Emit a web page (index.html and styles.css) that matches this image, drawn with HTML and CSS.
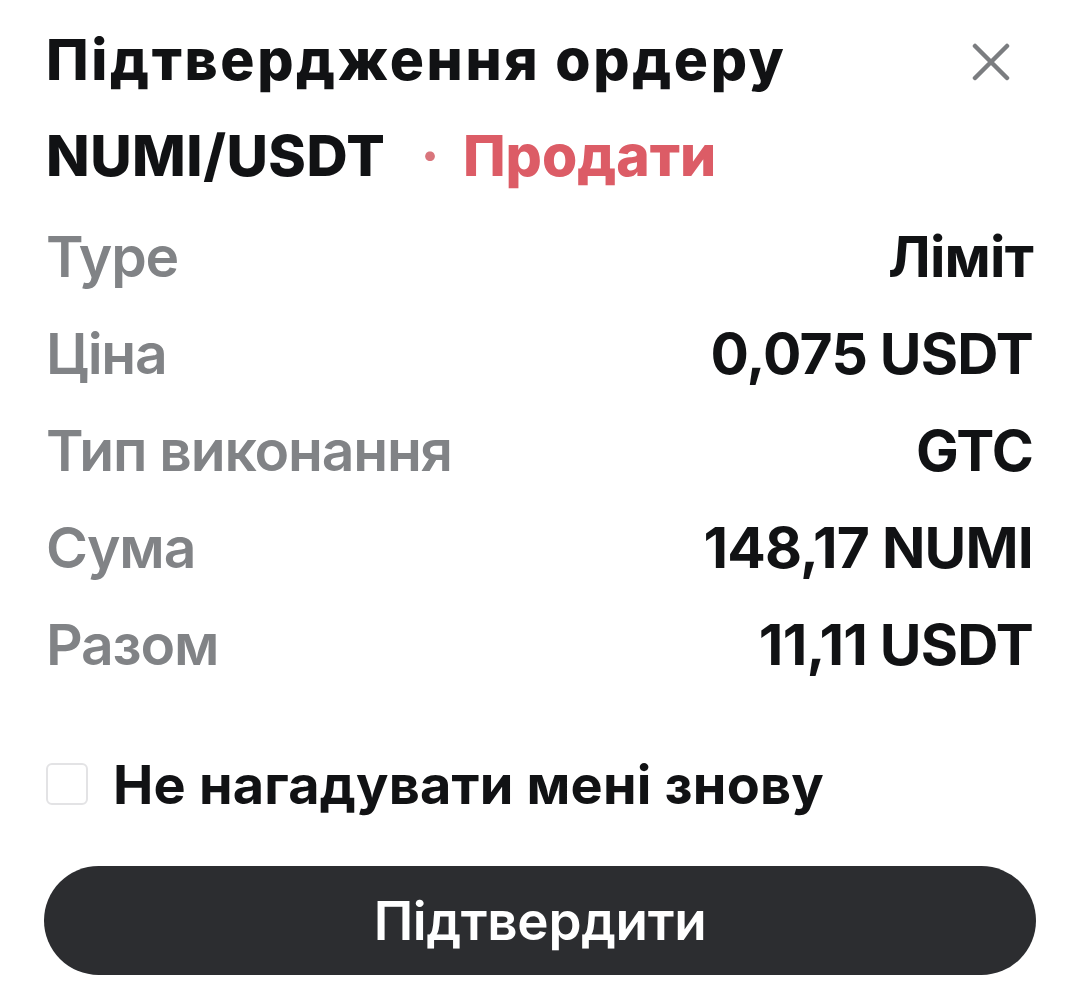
FILE: index.html
```html
<!DOCTYPE html>
<html lang="uk">
<head>
<meta charset="utf-8">
<title>Підтвердження ордеру</title>
<link rel="stylesheet" href="styles.css">
</head>
<body>
<div class="sheet">
  <div class="head">
    <h1 class="title">Підтвердження ордеру</h1>
    <button class="close" aria-label="Закрити">
      <svg width="38" height="38" viewBox="0 0 38 38"><path d="M3 3 L35 35 M35 3 L3 35" stroke="#7b7d80" stroke-width="4.5" stroke-linecap="round" fill="none"/></svg>
    </button>
  </div>
  <div class="pair">NUMI/USDT <span class="dot">·</span> <span class="sell">Продати</span></div>
  <div class="rows">
    <div class="row"><span class="label">Type</span><span class="value">Ліміт</span></div>
    <div class="row"><span class="label">Ціна</span><span class="value">0,075 USDT</span></div>
    <div class="row"><span class="label">Тип виконання</span><span class="value">GTC</span></div>
    <div class="row"><span class="label">Сума</span><span class="value">148,17 NUMI</span></div>
    <div class="row"><span class="label">Разом</span><span class="value">11,11 USDT</span></div>
  </div>
  <label class="remember"><span class="box"></span><span class="remember-text">Не нагадувати мені знову</span></label>
  <button class="confirm">Підтвердити</button>
</div>
</body>
</html>
```
FILE: styles.css
```css
* { box-sizing: border-box; }
html, body { margin: 0; padding: 0; background: #ffffff; }
body {
  font-family: Inter, "Noto Sans", "Liberation Sans", sans-serif;
  color: #111214;
}
.sheet {
  width: 1080px;
  padding: 12px 47px 0 46px;
}
.head {
  display: flex;
  align-items: center;
  justify-content: space-between;
  height: 96px;
}
.title {
  margin: 0;
  font-size: 57px;
  font-weight: 800;
  line-height: 96px;
  letter-spacing: 2.6px;
}
.close {
  border: 0;
  background: none;
  padding: 0;
  margin-right: 23px;
  margin-top: 4px;
  width: 38px;
  height: 38px;
  display: flex;
}
.pair {
  height: 96px;
  line-height: 96px;
  font-size: 57px;
  font-weight: 800;
  letter-spacing: 0.5px;
}
.dot { color: #d9757c; margin: 0 10px 0 22px; font-weight: 700; }
.sell { color: #dc5c66; letter-spacing: 0; }
.rows { margin-top: 4px; }
.row {
  display: flex;
  justify-content: space-between;
  align-items: center;
  height: 97px;
  font-size: 57px;
  line-height: 97px;
}
.label { color: #818386; font-weight: 600; letter-spacing: -1.2px; }
.value { color: #111214; font-weight: 700; letter-spacing: -0.8px; }
.remember {
  display: flex;
  align-items: center;
  height: 60px;
  margin-top: 61px;
}
.box {
  width: 42px;
  height: 42px;
  border: 2px solid #e3e3e5;
  border-radius: 6px;
  margin-right: 25px;
  flex: none;
}
.remember-text {
  font-size: 54px;
  font-weight: 700;
  color: #111214;
  letter-spacing: 0.2px;
}
.confirm {
  display: block;
  margin: 52px 0 0 -2px;
  width: 992px;
  height: 109px;
  border: 0;
  border-radius: 55px;
  background: #2c2d30;
  color: #ffffff;
  font-family: inherit;
  font-size: 53px;
  font-weight: 600;
  letter-spacing: -0.3px;
}
```
